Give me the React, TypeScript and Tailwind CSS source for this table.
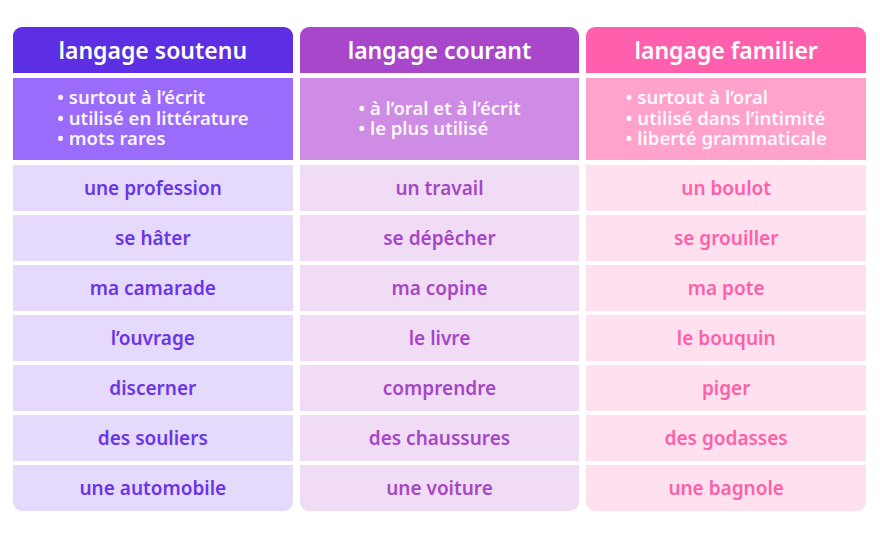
const columns = [
  {
    title: 'langage soutenu',
    head: 'bg-[#5c2ee4]',
    note: 'bg-[#9b6bfb]',
    cell: 'bg-[#e5dafb] text-[#6b34e8]',
    notes: ['surtout à l’écrit', 'utilisé en littérature', 'mots rares'],
    words: ['une profession', 'se hâter', 'ma camarade', 'l’ouvrage', 'discerner', 'des souliers', 'une automobile'],
  },
  {
    title: 'langage courant',
    head: 'bg-[#a847c9]',
    note: 'bg-[#cf8ce5]',
    cell: 'bg-[#f1dcf5] text-[#a646c6]',
    notes: ['à l’oral et à l’écrit', 'le plus utilisé'],
    words: ['un travail', 'se dépêcher', 'ma copine', 'le livre', 'comprendre', 'des chaussures', 'une voiture'],
  },
  {
    title: 'langage familier',
    head: 'bg-[#ff5fad]',
    note: 'bg-[#ffa3cd]',
    cell: 'bg-[#ffe0ee] text-[#ff5ea9]',
    notes: ['surtout à l’oral', 'utilisé dans l’intimité', 'liberté grammaticale'],
    words: ['un boulot', 'se grouiller', 'ma pote', 'le bouquin', 'piger', 'des godasses', 'une bagnole'],
  },
];

export default function App() {
  return (
    <div className="w-[880px] h-[540px] bg-white pl-[13px] pr-[14px] pt-[27px] font-['Noto_Sans',sans-serif]">
      <div className="grid grid-cols-3 gap-[7px]">
        {columns.map((col) => (
          <div key={col.title} className="flex flex-col gap-[5px]">
            <div className={`${col.head} h-[46px] rounded-t-[9px] flex items-center justify-center text-white text-[23px] font-semibold`}>
              {col.title}
            </div>
            <div className={`${col.note} h-[82px] flex items-center justify-center`}>
              <ul className="text-white/95 text-[18.5px] font-semibold leading-[20.5px] -mt-[2px]">
                {col.notes.map((n) => (
                  <li key={n}>• {n}</li>
                ))}
              </ul>
            </div>
            <div className="flex flex-col gap-[4px]">
              {col.words.map((w, i) => (
                <div
                  key={w}
                  className={`${col.cell} h-[46px] flex items-center justify-center text-[19px] font-semibold ${i === col.words.length - 1 ? 'rounded-b-[9px]' : ''}`}
                >
                  {w}
                </div>
              ))}
            </div>
          </div>
        ))}
      </div>
    </div>
  );
}
